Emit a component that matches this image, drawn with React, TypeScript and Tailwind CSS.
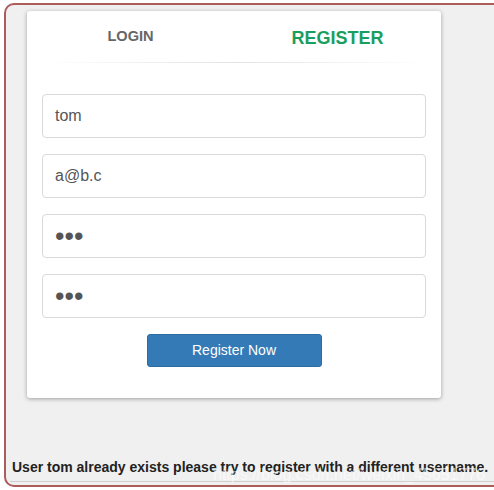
import React from "react";

export default function App() {
  return (
    <div className="w-[494px] h-[490px] overflow-hidden bg-white relative" style={{ fontFamily: '"Liberation Sans", Arial, sans-serif' }}>
      <div className="ml-[4px] mt-[3px] w-[540px] h-[484px] border-2 border-[#ad5c5c] rounded-[10px] bg-[#f0f0f0] flex flex-col">
        <div className="ml-[21px] mt-[6px] w-[414px] bg-white rounded-[3px] shadow-[0_1px_4px_rgba(0,0,0,0.35)] px-[15px] pb-[31px]">
          <div className="flex h-[51px] -mx-[15px]">
            <div className="w-1/2 flex items-start justify-center pt-[15px] text-[14.6px] font-bold text-[#666]">LOGIN</div>
            <div className="w-1/2 flex items-start justify-center pt-[14px] text-[18px] font-bold text-[#1a9e5f]">REGISTER</div>
          </div>
          <div className="h-px mx-[3px] bg-gradient-to-r from-transparent via-[#e2e2e2] to-transparent" />
          <div className="mt-[31px] flex flex-col gap-[16px]">
            {[
              { t: "text", v: "tom" },
              { t: "text", v: "a@b.c" },
            ].map((f, i) => (
              <input
                key={i}
                type={f.t}
                defaultValue={f.v}
                className="block w-full h-[44px] border border-[#d9d9d9] rounded-[4px] px-[12px] text-[16px] text-[#555] outline-none bg-white"
                style={{ fontFamily: '"Liberation Sans", Arial, sans-serif' }}
              />
            ))}
            {[0, 1].map((i) => (
              <input
                key={"p" + i}
                type="password"
                defaultValue="abc"
                className="block w-full h-[44px] border border-[#d9d9d9] rounded-[4px] px-[12px] text-[27px] text-[#555] outline-none bg-white"
                style={{ fontFamily: '"Liberation Sans", Arial, sans-serif' }}
              />
            ))}
          </div>
          <div className="flex justify-center mt-[16px]">
            <button className="w-[175px] h-[33px] bg-[#337ab7] border border-[#2e6da4] rounded-[3px] text-white text-[14px]">
              Register Now
            </button>
          </div>
        </div>
        <div className="mt-[61px] ml-[6px] text-[14px] font-bold text-[#222] leading-[16px]">
          User tom already exists please try to register with a different username.
        </div>
        <div className="mt-[6px] ml-[4px] h-px bg-[#cfcfcf]" />
      </div>
      <div className="absolute left-[213px] top-[466px] text-[16px] text-[#ffffff]/60 leading-[18px] pointer-events-none">
        https://blog.csdn.net/weixin_45651776
      </div>
    </div>
  );
}
